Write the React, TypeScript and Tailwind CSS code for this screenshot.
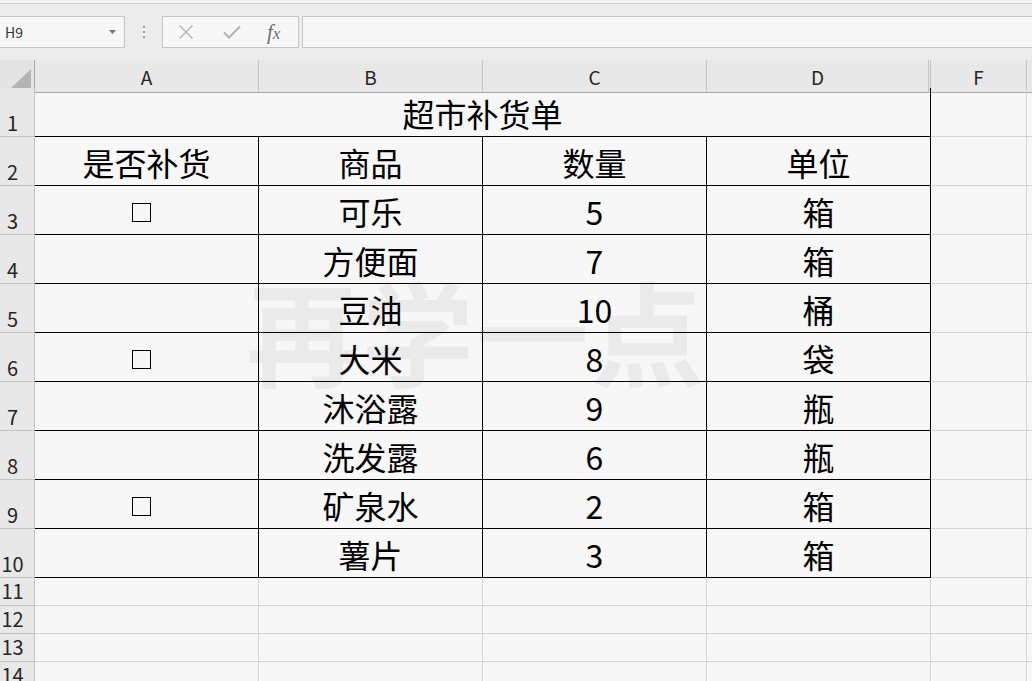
import React from "react";

const rows = [
  { item: "可乐", qty: "5", unit: "箱", box: true },
  { item: "方便面", qty: "7", unit: "箱", box: false },
  { item: "豆油", qty: "10", unit: "桶", box: false },
  { item: "大米", qty: "8", unit: "袋", box: true },
  { item: "沐浴露", qty: "9", unit: "瓶", box: false },
  { item: "洗发露", qty: "6", unit: "瓶", box: false },
  { item: "矿泉水", qty: "2", unit: "箱", box: true },
  { item: "薯片", qty: "3", unit: "箱", box: false },
];

const font = { fontFamily: '"Noto Sans CJK SC", "Noto Sans", sans-serif' };

function RowHead({ n, tall }: { n: number; tall?: boolean }) {
  return (
    <div
      className={`flex items-end border-r border-b border-[#c4c4c4] bg-[#e8e8e8] text-[20px] leading-none text-[#262626] ${
        tall ? "h-[49px] pb-[3px]" : "h-[28px] pb-[4px]"
      }`}
    >
      <span className="w-[25px] text-center">{n}</span>
    </div>
  );
}

function Cell({ children, className = "" }: { children?: React.ReactNode; className?: string }) {
  return (
    <div
      className={`flex h-[49px] items-center justify-center border-r border-b border-black pt-[1px] text-[32px] leading-none text-black ${className}`}
    >
      {children}
    </div>
  );
}

function FormulaBar() {
  return (
    <div className="h-[60px] bg-[#ececec]">
      <div className="h-[4px] border-b border-[#d0d0d0] bg-[#f2f2f2]" />
      <div className="mt-[12px] flex h-[32px] items-stretch">
        <div className="flex w-[125px] items-center justify-between border border-l-0 border-[#c6c6c6] bg-[#f7f7f7] pl-[5px] pr-[7px]">
          <span className="text-[14px] text-[#333]" style={font}>
            H9
          </span>
          <svg width="8" height="5" viewBox="0 0 8 5">
            <path d="M0 0h7L3.5 4z" fill="#777" />
          </svg>
        </div>
        <div className="flex w-[37px] flex-col items-center justify-center gap-[3px]">
          <span className="h-[2px] w-[2px] bg-[#9a9a9a]" />
          <span className="h-[2px] w-[2px] bg-[#9a9a9a]" />
          <span className="h-[2px] w-[2px] bg-[#9a9a9a]" />
        </div>
        <div className="flex w-[137px] items-center border border-[#c6c6c6] bg-[#f7f7f7]">
          <svg className="ml-[15px]" width="16" height="16" viewBox="0 0 16 16">
            <path d="M1.5 1.5l13 13M14.5 1.5l-13 13" stroke="#b3b3b3" strokeWidth="1.4" />
          </svg>
          <svg className="ml-[29px]" width="18" height="14" viewBox="0 0 18 14">
            <path d="M1 7.5l5 5L17 1.5" stroke="#b3b3b3" strokeWidth="2" fill="none" />
          </svg>
          <span
            className="ml-[26px] text-[21px] italic leading-none text-[#6e6e6e]"
            style={{ fontFamily: '"Liberation Serif", serif' }}
          >
            f<span className="text-[17px]">x</span>
          </span>
        </div>
        <div className="ml-[3px] flex-1 border border-r-0 border-[#c6c6c6] bg-[#f7f7f7]" />
      </div>
    </div>
  );
}

export default function App() {
  const cols = "35px 224px 224px 224px 222px 2px 96px 1fr";
  return (
    <div className="h-[681px] w-[1032px] overflow-hidden bg-[#f7f7f7]" style={font}>
      <FormulaBar />

      <div className="relative">
        {/* column header */}
        <div className="grid h-[28px]" style={{ gridTemplateColumns: cols }}>
          <div className="flex items-end justify-end border-r border-b border-[#a8a8a8] bg-[#e4e4e4] pb-[4px] pr-[3px]">
            <svg width="20" height="19" viewBox="0 0 20 19">
              <path d="M20 0v19H0z" fill="#b4b4b4" />
            </svg>
          </div>
          {["A", "B", "C", "D", "", "F", ""].map((c, i) => (
            <div
              key={i}
              className={`flex items-center justify-center border-b border-[#a8a8a8] bg-[#e8e8e8] pt-[3px] text-[19px] text-[#262626] ${
                i < 6 ? "border-r border-r-[#c4c4c4]" : ""
              }`}
            >
              {c}
            </div>
          ))}
        </div>

        {/* body */}
        <div className="grid" style={{ gridTemplateColumns: cols }}>
          <RowHead n={1} tall />
          <Cell className="col-span-5">超市补货单</Cell>
          <div className="border-r border-b border-[#d4d4d4]" />
          <div className="border-b border-[#d4d4d4]" />

          <RowHead n={2} tall />
          <Cell>是否补货</Cell>
          <Cell>商品</Cell>
          <Cell>数量</Cell>
          <Cell className="col-span-2">单位</Cell>
          <div className="border-r border-b border-[#d4d4d4]" />
          <div className="border-b border-[#d4d4d4]" />

          {rows.map((r, i) => (
            <React.Fragment key={i}>
              <RowHead n={i + 3} tall />
              <Cell>
                {r.box && <span className="mr-[11px] mt-[4px] h-[19px] w-[19px] border-[1.5px] border-black" />}
              </Cell>
              <Cell>{r.item}</Cell>
              <Cell>{r.qty}</Cell>
              <Cell className="col-span-2">{r.unit}</Cell>
              <div className="border-r border-b border-[#d4d4d4]" />
              <div className="border-b border-[#d4d4d4]" />
            </React.Fragment>
          ))}

          {[11, 12, 13, 14].map((n) => (
            <React.Fragment key={n}>
              <RowHead n={n} />
              <div className="border-r border-b border-[#d4d4d4]" />
              <div className="border-r border-b border-[#d4d4d4]" />
              <div className="border-r border-b border-[#d4d4d4]" />
              <div className="col-span-2 border-r border-b border-[#d4d4d4]" />
              <div className="border-r border-b border-[#d4d4d4]" />
              <div className="border-b border-[#d4d4d4]" />
            </React.Fragment>
          ))}
        </div>

        {/* watermark */}
        <div className="pointer-events-none absolute left-[246px] top-[213px] select-none text-[113px] font-bold leading-none tracking-[2px] text-black/[0.05]">
          再学一点
        </div>
      </div>
    </div>
  );
}
